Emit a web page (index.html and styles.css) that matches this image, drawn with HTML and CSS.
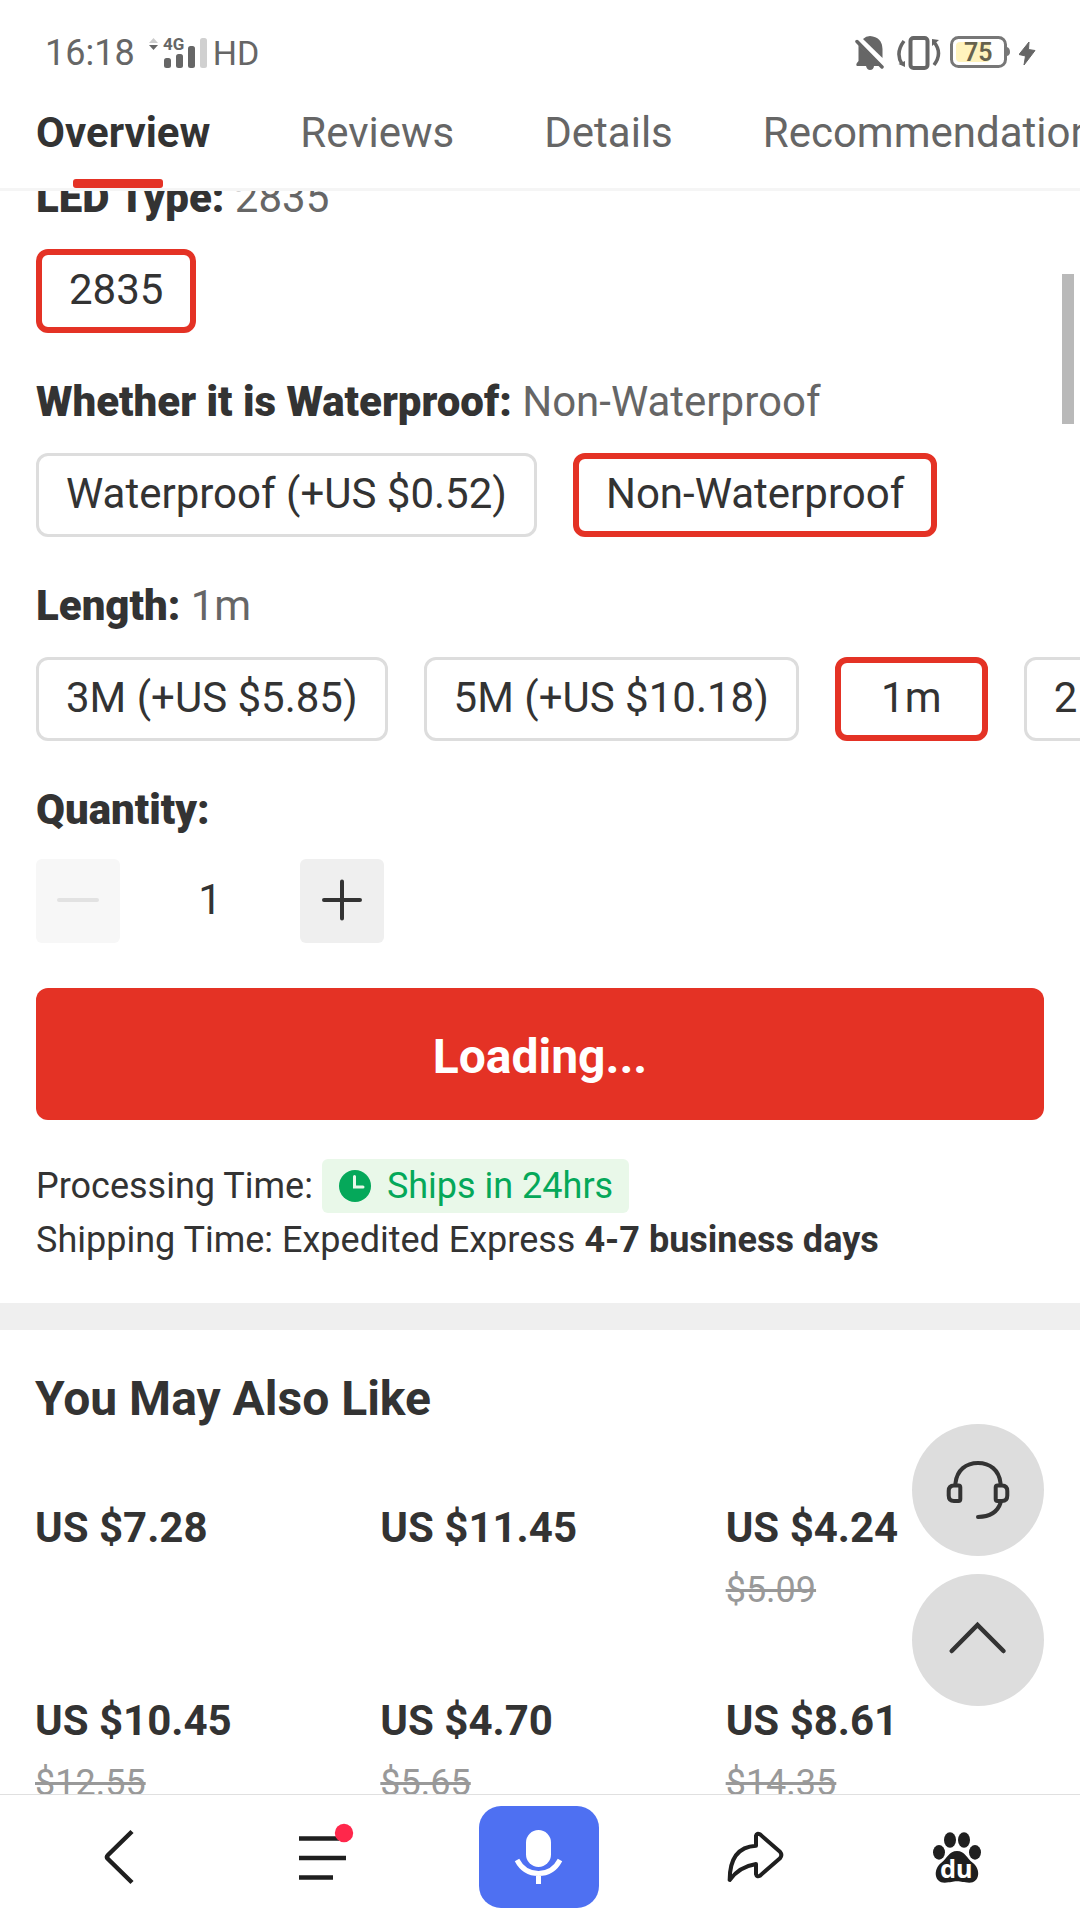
FILE: index.html
```html
<!DOCTYPE html>
<html lang="en">
<head>
<meta charset="utf-8">
<meta name="viewport" content="width=device-width, initial-scale=1">
<title>Product overview</title>
<link rel="stylesheet" href="styles.css">
</head>
<body>
<div class="app">
  <header class="header">
    <div class="status">
      <span class="status-text">16:18</span>
      <svg class="signal" width="60" height="34" viewBox="0 0 60 34" aria-hidden="true">
        <path d="M1 7L5.500 2L10 7z" fill="#ccc"/>
        <path d="M1 9H10L5.500 14z" fill="#666"/>
        <text x="15" y="14" class="signal-label">4G</text>
        <rect x="16" y="22" width="7" height="10" rx="2.500" fill="#666"/>
        <rect x="28" y="18" width="7" height="14" rx="2.500" fill="#666"/>
        <rect x="40" y="10" width="7" height="22" rx="2.500" fill="#666"/>
        <rect x="52" y="2" width="7" height="30" rx="2.500" fill="#d0d0d0"/>
      </svg>
      <span class="status-text network">HD</span>
      <div class="status-icons">
        <svg width="33" height="34" viewBox="0 0 33 34" aria-hidden="true">
          <path d="M8 3Q11 0 15 0Q27 1 27.500 13V22z" fill="#666"/>
          <path d="M3.500 9L25 30H19Q18.500 34 15 34Q12 34 11 30H2Q0 28.500 3.500 25z" fill="#666"/>
          <path d="M2 5.500L27 31" stroke="#666" stroke-width="3.500" stroke-linecap="round"/>
        </svg>
        <svg width="44" height="34" viewBox="0 0 44 34" aria-hidden="true" fill="none" stroke="#666">
          <rect x="13.500" y="2" width="17" height="30" rx="3" stroke-width="4"/>
          <path d="M7 5Q-2 17 5 28M37 6Q46 17 37 29" stroke-width="3.500"/>
          <path d="M1.500 28L8 31V25zM35 3V10L42 4z" fill="#666" stroke="none"/>
        </svg>
        <svg width="60" height="34" viewBox="0 0 60 34" aria-hidden="true">
          <rect x="1.500" y="1.500" width="54" height="29" rx="7" fill="none" stroke="#777" stroke-width="3"/>
          <path d="M57 11Q60 12 60 16Q60 19 57 20z" fill="#777"/>
          <rect x="6" y="6" width="34" height="20" rx="4" fill="#fff3bd"/>
          <text x="14" y="25" class="battery-label">75</text>
        </svg>
        <svg width="18" height="34" viewBox="0 0 18 34" aria-hidden="true">
          <path d="M10 6L0 18.500L6.500 20L5 29L16 14.500L9.500 13.500z" fill="#666" stroke="#666" stroke-linejoin="round"/>
        </svg>
      </div>
    </div>
    <nav class="tabs">
      <a class="tab tab-active" href="#overview">Overview</a>
      <a class="tab" href="#reviews">Reviews</a>
      <a class="tab" href="#details">Details</a>
      <a class="tab" href="#recommendations">Recommendations</a>
    </nav>
  </header>

  <main class="content">
    <section class="product" id="overview">
      <div class="group">
        <h3 class="label">LED Type: <span class="value">2835</span></h3>
        <div class="options">
          <button type="button" class="option selected">2835</button>
        </div>
      </div>
      <div class="group">
        <h3 class="label">Whether it is Waterproof: <span class="value">Non-Waterproof</span></h3>
        <div class="options">
          <button type="button" class="option">Waterproof (+US $0.52)</button>
          <button type="button" class="option selected">Non-Waterproof</button>
        </div>
      </div>
      <div class="group">
        <h3 class="label">Length: <span class="value">1m</span></h3>
        <div class="options">
          <button type="button" class="option">3M (+US $5.85)</button>
          <button type="button" class="option">5M (+US $10.18)</button>
          <button type="button" class="option selected">1m</button>
          <button type="button" class="option">2M (+US $3.90)</button>
        </div>
      </div>
      <div class="quantity">
        <label class="label" for="qty">Quantity:</label>
        <div class="stepper">
          <button type="button" class="step" disabled aria-label="Decrease quantity">
            <svg width="44" height="44" viewBox="0 0 44 44"><path d="M3 21H41" stroke="#e2e2e2" stroke-width="4" stroke-linecap="round"/></svg>
          </button>
          <input class="qty" id="qty" type="text" inputmode="numeric" value="1">
          <button type="button" class="step" aria-label="Increase quantity">
            <svg width="44" height="44" viewBox="0 0 44 44"><path d="M4 21H40M22 2.500V39.500" stroke="#333" stroke-width="4" stroke-linecap="round"/></svg>
          </button>
        </div>
      </div>
      <button type="button" class="buy">Loading...</button>
      <div class="shipping">
        <p class="ship-line">Processing Time:
          <span class="badge">
            <svg width="32" height="32" viewBox="0 0 32 32" aria-hidden="true"><circle cx="16" cy="16" r="16" fill="#05a85a"/><path d="M15.500 6.500V17H24" fill="none" stroke="#e9f8e9" stroke-width="3" stroke-linecap="round"/></svg>
            Ships in 24hrs
          </span>
        </p>
        <p class="ship-line">Shipping Time: Expedited Express <b>4-7 business days</b></p>
      </div>
    </section>

    <section class="related" id="recommendations">
      <h2 class="related-title">You May Also Like</h2>
      <div class="products">
        <div class="item"><b class="price">US $7.28</b></div>
        <div class="item"><b class="price">US $11.45</b></div>
        <div class="item"><b class="price">US $4.24</b><s class="old">$5.09</s></div>
        <div class="item"><b class="price">US $10.45</b><s class="old">$12.55</s></div>
        <div class="item"><b class="price">US $4.70</b><s class="old">$5.65</s></div>
        <div class="item"><b class="price">US $8.61</b><s class="old">$14.35</s></div>
      </div>
    </section>
    <div class="scroll-thumb"></div>
  </main>

  <div class="floating">
    <button type="button" class="round" aria-label="Customer service">
      <svg width="132" height="132" viewBox="0 0 132 132" fill="none" stroke="#333" stroke-width="4" stroke-linecap="round">
        <path d="M43.500 60V59C45 46 54 39 66 39S87 46 88.500 59V60"/>
        <path d="M42 61.500H46.500Q48.300 61.500 48.300 63.500V75Q48.300 77 46.500 77H42Q36.700 77 36.700 71.500V67Q36.700 61.500 42 61.500z"/>
        <path d="M90 61.500H85.500Q83.700 61.500 83.700 63.500V75Q83.700 77 85.500 77H90Q95.300 77 95.300 71.500V67Q95.300 61.500 90 61.500z"/>
        <path d="M88.500 79Q84 92.500 66 93"/>
      </svg>
    </button>
    <button type="button" class="round" aria-label="Back to top">
      <svg width="132" height="132" viewBox="0 0 132 132" fill="none" stroke="#333" stroke-width="4.500" stroke-linecap="round"><path d="M39.700 77L65.500 51L91.500 77"/></svg>
    </button>
  </div>

  <nav class="toolbar">
    <button type="button" class="tool" aria-label="Back">
      <svg width="54" height="60" viewBox="0 0 54 60" fill="none" stroke="#1f1f1f" stroke-width="4.500"><path d="M40 4.500L16 28Q14 30 16 32L40 55.500"/></svg>
    </button>
    <button type="button" class="tool" aria-label="Menu">
      <svg width="54" height="60" viewBox="0 0 54 60"><path d="M3 11.500H43M3 31H50M3 50.500H37" stroke="#1f1f1f" stroke-width="4.500"/><circle cx="48" cy="6" r="9.200" fill="#ff274b"/></svg>
    </button>
    <button type="button" class="mic" aria-label="Voice search">
      <svg width="120" height="102" viewBox="0 0 120 102"><rect x="47" y="24" width="25" height="37" rx="12.500" fill="#fff"/><path d="M38 54Q45 67.500 59.500 67.500T81 54M59.500 67V78" fill="none" stroke="#fff" stroke-width="5"/></svg>
    </button>
    <button type="button" class="tool" aria-label="Share">
      <svg width="59" height="54" viewBox="137 150 177 162" fill="none" stroke="#1f1f1f" stroke-width="12" stroke-linejoin="round"><path d="M151 300C151 236 175 200 230 197V167Q232 158 242 163L302 215Q310 225 302 235L242 287Q232 292 230 282V252Q180 260 151 300z"/></svg>
    </button>
    <button type="button" class="tool" aria-label="Home">
      <svg width="51" height="54" viewBox="759 150 153 162" fill="#1f1f1f">
        <ellipse cx="777" cy="217" rx="18" ry="22"/><ellipse cx="810" cy="180" rx="18" ry="23"/><ellipse cx="852" cy="180" rx="18" ry="23"/><ellipse cx="885" cy="217" rx="18" ry="22"/>
        <path d="M831 213C855 213 860 235 878 248C904 268 899 308 868 308C850 308 845 304 831 304S812 308 794 308C763 308 758 268 784 248C802 235 807 213 831 213z"/>
        <text x="829" y="295" text-anchor="middle" class="paw-label">du</text>
      </svg>
    </button>
  </nav>
</div>
</body>
</html>
```
FILE: styles.css
```css
* { box-sizing: border-box; }

body {
  margin: 0;
  background: #fff;
  color: #333;
  font-family: Roboto, "Liberation Sans", sans-serif;
  font-size: 42px;
  line-height: 48px;
}

h2, h3, p { margin: 0; }
svg { display: block; flex: none; }

button, input {
  border: 0;
  padding: 0;
  margin: 0;
  background: none;
  color: inherit;
  font: inherit;
}

.app {
  position: relative;
  display: flex;
  flex-direction: column;
  height: 100vh;
  overflow: hidden;
}

/* Status bar and tabs */
.header {
  flex: none;
  border-bottom: 3px solid #f5f5f5;
}

.status {
  display: flex;
  align-items: center;
  height: 106px;
  padding: 0 43px 0 45px;
  color: #666;
}

.status-text {
  font-size: 36px;
  line-height: 42px;
}

.status-text.network { font-size: 34px; }

.signal { margin: 0 5px 0 13px; }

.signal-label {
  font-size: 17px;
  font-weight: 700;
  fill: #666;
}

.status-icons {
  display: flex;
  gap: 9px;
  margin-left: auto;
}

.battery-label {
  font-size: 25px;
  font-weight: 600;
  fill: #66624d;
}

.tabs {
  display: flex;
  gap: 90px;
  padding: 3px 36px 0;
  overflow: hidden;
}

.tab {
  position: relative;
  flex: none;
  padding-bottom: 31px;
  color: #666;
  text-decoration: none;
}

.tab-active {
  color: #333;
  font-weight: 700;
}

.tab-active::after {
  content: "";
  position: absolute;
  left: 37px;
  bottom: 0;
  width: 90px;
  height: 9px;
  border-radius: 3px;
  background: #e43225;
}

/* Scrolled product area */
.content {
  position: relative;
  flex: 1;
  min-height: 0;
  overflow: hidden;
}

.product {
  margin-top: -17px;
  padding: 0 36px 36px;
  border-bottom: 27px solid #efefef;
}

.group { margin-bottom: 45px; }

.label {
  display: block;
  font-size: 42px;
  font-weight: 900;
}

.value {
  color: #666;
  font-weight: 400;
}

.options {
  display: flex;
  gap: 36px;
  margin: 27px -36px 0 0;
  overflow: hidden;
}

.option {
  flex: none;
  min-width: 153px;
  height: 84px;
  padding: 0 27px 3px;
  border: 3px solid #ddd;
  border-radius: 12px;
  white-space: nowrap;
}

.option.selected { border: 6px solid #e43225; }

.stepper {
  display: flex;
  margin-top: 25px;
}

.step {
  display: flex;
  align-items: center;
  justify-content: center;
  width: 84px;
  height: 84px;
  border-radius: 6px;
  background: #efefef;
}

.step:disabled { background: #f7f7f7; }

.qty {
  width: 180px;
  padding-bottom: 3px;
  text-align: center;
}

.buy {
  display: block;
  width: 100%;
  height: 132px;
  margin: 45px 0 39px;
  padding-top: 6px;
  border-radius: 12px;
  background: #e43225;
  color: #fff;
  font-size: 48px;
  font-weight: 700;
}

.ship-line {
  display: flex;
  align-items: center;
  gap: 9px;
  font-size: 36px;
  line-height: 54px;
}

.badge {
  display: flex;
  align-items: center;
  gap: 16px;
  padding: 0 16px 0 17px;
  border-radius: 6px;
  background: #e9f8e9;
  color: #05a85a;
}

/* Related products */
.related { padding: 39px 9px 0 35px; }

.related-title {
  font-size: 48px;
  line-height: 60px;
}

.products {
  display: grid;
  grid-template-columns: repeat(3, 1fr);
  gap: 83px 0;
  margin-top: 75px;
}

.item {
  display: flex;
  flex-direction: column;
  align-items: flex-start;
  gap: 14px;
}

.old {
  color: #999;
  font-size: 36px;
}

.scroll-thumb {
  position: absolute;
  top: 83px;
  right: 6px;
  width: 12px;
  height: 150px;
  background: #b9b9b9;
}

.floating {
  position: absolute;
  right: 36px;
  bottom: 214px;
  display: flex;
  flex-direction: column;
  gap: 18px;
}

.round {
  border-radius: 50%;
  background: #ddd;
}

/* Browser toolbar */
.toolbar {
  flex: none;
  display: flex;
  align-items: center;
  justify-content: space-between;
  padding: 11px 74px 12px 71px;
  border-top: 1px solid #e0e0e0;
  background: #fff;
}

.tool {
  display: flex;
  align-items: center;
  justify-content: center;
  width: 96px;
  height: 102px;
}

.tool svg { overflow: visible; }

.mic {
  border-radius: 22px;
  background: #4e70f2;
}

.paw-label {
  font-family: "Noto Sans", sans-serif;
  font-size: 76px;
  font-weight: 700;
  fill: #fff;
}
```
